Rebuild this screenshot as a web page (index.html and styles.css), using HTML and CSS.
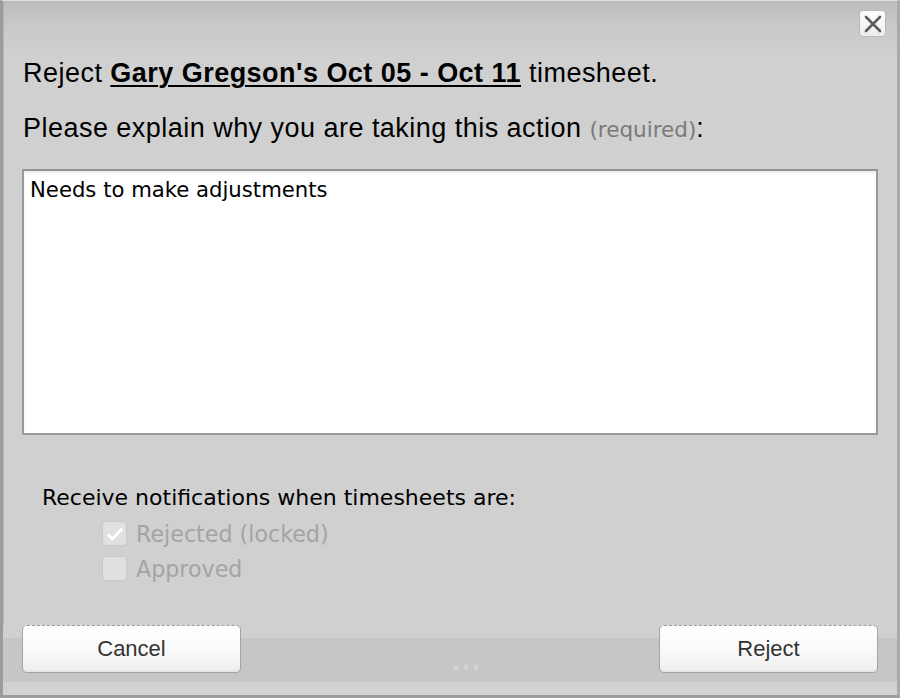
FILE: index.html
```html
<!DOCTYPE html>
<html lang="en">
<head>
<meta charset="utf-8">
<title>Reject timesheet</title>
<link rel="stylesheet" href="styles.css">
</head>
<body>
<div class="dialog">
  <div class="titlebar">
    <button class="close" type="button" aria-label="Close">
      <svg width="18" height="18" viewBox="0 0 18 18"><path d="M2 2 L16 16 M16 2 L2 16" stroke="#5c5c5c" stroke-width="2.6" stroke-linecap="round" fill="none"/></svg>
    </button>
  </div>
  <div class="content">
    <p class="heading">Reject <a class="who">Gary Gregson's Oct 05 - Oct 11</a> timesheet.</p>
    <p class="heading explain">Please explain why you are taking this action <span class="req">(required)</span>:</p>
    <textarea class="reason">Needs to make adjustments</textarea>
    <p class="notify">Receive notifications when timesheets are:</p>
    <div class="opts">
      <label class="opt"><span class="box checked"><svg width="18" height="16" viewBox="0 0 18 16"><path d="M2 8.5 L6.5 13 L16 2.5" stroke="#fff" stroke-width="3" fill="none" stroke-linejoin="round"/></svg></span>Rejected (locked)</label>
      <label class="opt"><span class="box"></span>Approved</label>
    </div>
  </div>
  <div class="footer">
    <button class="btn" type="button">Cancel</button>
    <div class="grip"><i></i><i></i><i></i></div>
    <button class="btn" type="button">Reject</button>
  </div>
</div>
</body>
</html>
```
FILE: styles.css
```css
html, body {
  margin: 0;
  padding: 0;
  background: #cfcfcf;
}
.dialog {
  width: 900px;
  height: 698px;
  box-sizing: border-box;
  display: flex;
  flex-direction: column;
  border-top: 1px solid #dcdcdc;
  border-left: 3px solid #9c9c9c;
  border-right: 3px solid #a9a9a9;
  border-bottom: 3px solid #9e9e9e;
  box-shadow: inset 1px 0 0 #b4b4b4;
  background: linear-gradient(#bcbcbc 0, #c9c9c9 25px, #d0d0d0 55px, #d0d0d0 100%);
  font-family: "Liberation Sans", Arial, sans-serif;
  color: #000;
}
.titlebar {
  height: 44px;
  box-sizing: border-box;
  padding: 9px 11px 0 0;
  display: flex;
  justify-content: flex-end;
  align-items: flex-start;
}
.close {
  width: 27px;
  height: 27px;
  padding: 0;
  margin: 0;
  border: 1px solid #b9b9b9;
  border-radius: 4px;
  background: linear-gradient(#ffffff, #ececec);
  display: flex;
  align-items: center;
  justify-content: center;
}
.content {
  padding: 0 19px;
}
.heading {
  margin: 13px 0 0;
  font-size: 27px;
  line-height: 30px;
  letter-spacing: 0.47px;
  padding-left: 1px;
}
.explain {
  margin-top: 25px;
}
.who {
  font-weight: bold;
  text-decoration: underline;
  text-decoration-thickness: 2px;
  text-underline-offset: 3px;
  color: #000;
}
.req {
  font-family: "DejaVu Sans", Verdana, sans-serif;
  font-size: 21.5px;
  line-height: 20px;
  letter-spacing: 0;
  color: #7a7a7a;
}
.reason {
  display: block;
  margin: 26px 0 0;
  width: 100%;
  height: 266px;
  box-sizing: border-box;
  border: 2px solid #9a9a9a;
  border-top-color: #949494;
  box-shadow: inset 0 2px 3px rgba(0,0,0,0.08);
  background: #fff;
  padding: 6px 5px 6px 6px;
  font-family: "DejaVu Sans", Verdana, sans-serif;
  font-size: 21.2px;
  line-height: 25px;
  color: #000;
  resize: none;
  overflow: hidden;
  outline: none;
}
.notify {
  margin: 50px 0 0 20px;
  font-family: "DejaVu Sans", Verdana, sans-serif;
  font-size: 22px;
  line-height: 26px;
}
.opts {
  margin-top: 5px;
  padding-left: 80px;
  display: flex;
  flex-direction: column;
}
.opt {
  height: 35px;
  display: flex;
  align-items: center;
  gap: 9px;
  font-family: "DejaVu Sans", Verdana, sans-serif;
  font-size: 22.2px;
  line-height: 26px;
  color: #a4a4a4;
}
.box {
  width: 25px;
  height: 25px;
  box-sizing: border-box;
  border: 1px solid #c8c8c8;
  border-radius: 4px;
  background: #e0e0e0;
  display: flex;
  align-items: center;
  justify-content: center;
}
.footer {
  margin-top: auto;
  height: 70px;
  box-sizing: border-box;
  padding: 0 19px;
  display: flex;
  justify-content: space-between;
  align-items: flex-start;
  background: linear-gradient(#d0d0d0 0, #d0d0d0 13px, #c6c6c6 13px, #c6c6c6 57px, #d2d2d2 57px, #d2d2d2 100%);
}
.btn {
  width: 219px;
  height: 48px;
  margin: 0;
  padding: 0;
  box-sizing: border-box;
  border: 1px solid #a3a3a3;
  border-top: 1px dashed #9e9e9e;
  border-radius: 5px;
  background: linear-gradient(#ffffff 0, #fafafa 50%, #eeeeee 100%);
  box-shadow: inset 0 -2px 0 #e6e6e6;
  font-family: "Liberation Sans", Arial, sans-serif;
  font-size: 22px;
  color: #333;
}
.grip {
  margin: 40px 0 0 32px;
  display: flex;
  gap: 6px;
}
.grip i {
  width: 4px;
  height: 5px;
  background: #d3d3d3;
}
```
